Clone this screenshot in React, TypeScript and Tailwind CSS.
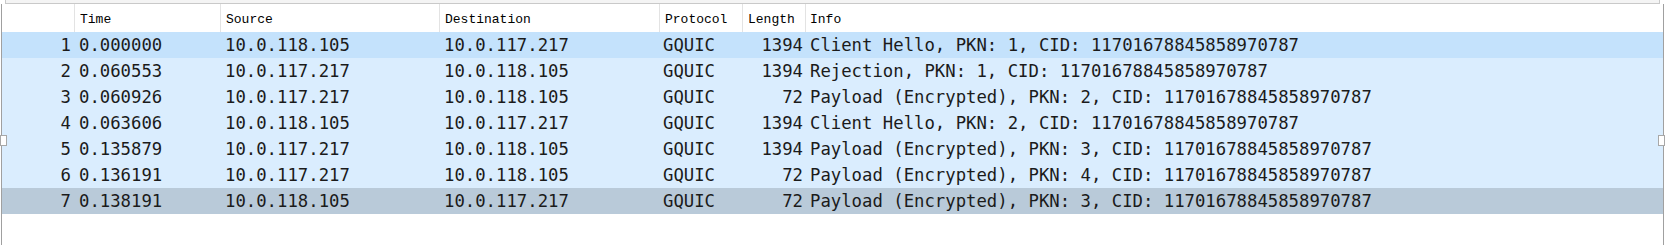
import React from "react";

const rows = [
  { no: 1, time: "0.000000", src: "10.0.118.105", dst: "10.0.117.217", proto: "GQUIC", len: 1394, info: "Client Hello, PKN: 1, CID: 11701678845858970787", bg: "bg-[#c4e2fc]" },
  { no: 2, time: "0.060553", src: "10.0.117.217", dst: "10.0.118.105", proto: "GQUIC", len: 1394, info: "Rejection, PKN: 1, CID: 11701678845858970787", bg: "bg-[#daedfe]" },
  { no: 3, time: "0.060926", src: "10.0.117.217", dst: "10.0.118.105", proto: "GQUIC", len: 72, info: "Payload (Encrypted), PKN: 2, CID: 11701678845858970787", bg: "bg-[#daedfe]" },
  { no: 4, time: "0.063606", src: "10.0.118.105", dst: "10.0.117.217", proto: "GQUIC", len: 1394, info: "Client Hello, PKN: 2, CID: 11701678845858970787", bg: "bg-[#daedfe]" },
  { no: 5, time: "0.135879", src: "10.0.117.217", dst: "10.0.118.105", proto: "GQUIC", len: 1394, info: "Payload (Encrypted), PKN: 3, CID: 11701678845858970787", bg: "bg-[#daedfe]" },
  { no: 6, time: "0.136191", src: "10.0.117.217", dst: "10.0.118.105", proto: "GQUIC", len: 72, info: "Payload (Encrypted), PKN: 4, CID: 11701678845858970787", bg: "bg-[#daedfe]" },
  { no: 7, time: "0.138191", src: "10.0.118.105", dst: "10.0.117.217", proto: "GQUIC", len: 72, info: "Payload (Encrypted), PKN: 3, CID: 11701678845858970787", bg: "bg-[#b9cad9]" },
];

const headers = [
  { label: "", w: "w-[73px]" },
  { label: "Time", w: "w-[146px]" },
  { label: "Source", w: "w-[219px]" },
  { label: "Destination", w: "w-[220px]" },
  { label: "Protocol", w: "w-[83px]" },
  { label: "Length", w: "w-[63px]" },
];

export default function App() {
  return (
    <div className="relative w-[1665px] h-[245px] bg-white overflow-hidden">
      {/* top strip: bottom edge of panel above */}
      <div className="h-[4px] pl-[5px] pr-[5px]">
        <div className="h-[4px] border-l border-r border-b border-[#c9c9c9] bg-[#f4f4f4]" />
      </div>
      {/* packet list frame */}
      <div className="ml-[1px] w-[1663px] h-[241px] border-l border-r border-[#a0a0a0] bg-white">
        {/* header */}
        <div
          className="flex h-[28px] items-center text-[13px] text-black bg-white"
          style={{ fontFamily: '"Liberation Mono", "DejaVu Sans Mono", monospace' }}
        >
          {headers.map((h, i) => (
            <div
              key={i}
              className={`${h.w} h-full flex items-center pl-[5px] pt-[3px] border-r border-[#e3e3e3] shrink-0`}
            >
              {h.label}
            </div>
          ))}
          <div className="flex-1 h-full flex items-center pl-[4px] pt-[3px]">Info</div>
        </div>
        {/* rows */}
        <div
          className="text-[17.3px] text-[#1b1b1b]"
          style={{ fontFamily: '"DejaVu Sans Mono", "Liberation Mono", monospace' }}
        >
          {rows.map((r) => (
            <div key={r.no} className={`flex h-[26px] items-center pt-[1px] ${r.bg} whitespace-pre`}>
              <div className="w-[73px] shrink-0 text-right pr-[4px]">{r.no}</div>
              <div className="w-[146px] shrink-0 pl-[4px]">{r.time}</div>
              <div className="w-[219px] shrink-0 pl-[4px]">{r.src}</div>
              <div className="w-[220px] shrink-0 pl-[4px]">{r.dst}</div>
              <div className="w-[83px] shrink-0 pl-[3px]">{r.proto}</div>
              <div className="w-[63px] shrink-0 text-right pr-[3px]">{r.len}</div>
              <div className="flex-1 pl-[4px]">{r.info}</div>
            </div>
          ))}
        </div>
      </div>
      {/* splitter handles */}
      <div className="absolute left-0 top-[135px] w-[7px] h-[11px] bg-white border border-[#a8a8a8]" />
      <div className="absolute right-0 top-[135px] w-[7px] h-[11px] bg-white border border-[#a8a8a8]" />
    </div>
  );
}
